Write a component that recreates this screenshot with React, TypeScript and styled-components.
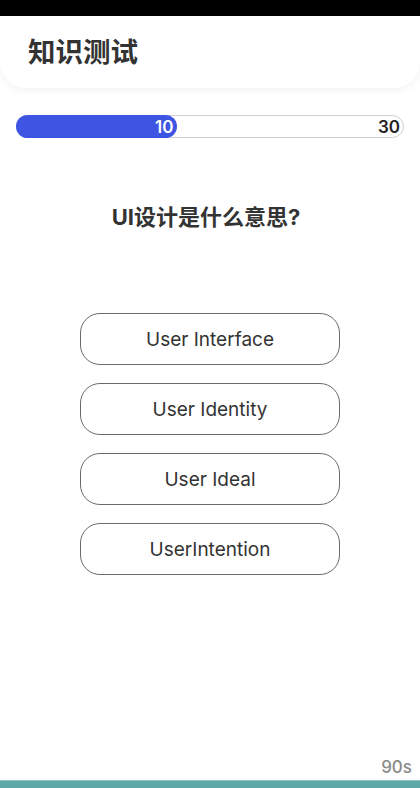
import styled, { createGlobalStyle } from 'styled-components'

const GlobalStyle = createGlobalStyle`
  html, body {
    margin: 0;
    padding: 0;
    background: #ffffff;
  }
  body {
    font-family: Inter, "Noto Sans CJK SC", "Noto Sans", sans-serif;
    color: #333333;
  }
`

const options = ['User Interface', 'User Identity', 'User Ideal', 'UserIntention']

const current = 10
const total = 30

const App = (): JSX.Element => {
  return (
    <Page>
      <GlobalStyle />
      <StatusBar />
      <Header>
        <Title>知识测试</Title>
      </Header>
      <ProgressTrack>
        <ProgressFill style={{ width: `${(current / total) * 100 + 8.5}%` }}>
          <FillLabel>{current}</FillLabel>
        </ProgressFill>
        <TotalLabel>{total}</TotalLabel>
      </ProgressTrack>
      <Question>UI设计是什么意思?</Question>
      <Options>
        {options.map((o) => (
          <OptionButton key={o}>{o}</OptionButton>
        ))}
      </Options>
      <Spacer />
      <Timer>90s</Timer>
      <BottomBar />
    </Page>
  )
}

const Page = styled.div`
  width: 420px;
  height: 788px;
  display: flex;
  flex-direction: column;
  overflow: hidden;
`
const StatusBar = styled.div`
  height: 16px;
  background: #000000;
  flex-shrink: 0;
`
const Header = styled.div`
  height: 72px;
  display: flex;
  align-items: center;
  padding: 0 28px 4px 28px;
  box-sizing: border-box;
  background: #ffffff;
  border-radius: 0 0 26px 26px;
  box-shadow: 0 2px 8px rgba(0, 0, 0, 0.06);
  flex-shrink: 0;
`
const Title = styled.h1`
  margin: 0;
  font-size: 27.5px;
  font-weight: 700;
  color: #333333;
  font-family: "Noto Sans CJK SC", sans-serif;
`
const ProgressTrack = styled.div`
  margin: 27px 16px 0 16px;
  height: 23px;
  border: 1px solid #cfcfcf;
  border-radius: 12px;
  box-sizing: border-box;
  display: flex;
  align-items: center;
  position: relative;
`
const ProgressFill = styled.div`
  position: absolute;
  left: -1px;
  top: -1px;
  height: 23px;
  background: #3d55e2;
  border-radius: 12px;
  display: flex;
  align-items: center;
  justify-content: flex-end;
  padding-right: 4px;
  box-sizing: border-box;
`
const FillLabel = styled.span`
  color: #ffffff;
  font-size: 17px;
  font-weight: 600;
`
const TotalLabel = styled.span`
  margin-left: auto;
  padding-right: 3px;
  font-size: 17px;
  font-weight: 600;
  color: #222222;
`
const Question = styled.h2`
  margin: 64px 8px 0 0;
  text-align: center;
  font-size: 22px;
  font-weight: 700;
  color: #333333;
  line-height: 30px;
`
const Options = styled.div`
  margin-top: 81px;
  display: flex;
  flex-direction: column;
  align-items: center;
  gap: 18px;
`
const OptionButton = styled.button`
  width: 260px;
  height: 52px;
  border: 1px solid #6a6a6a;
  border-radius: 20px;
  background: #ffffff;
  font-family: Inter, "Noto Sans", sans-serif;
  font-size: 19px;
  color: #333333;
  cursor: pointer;
`
const Spacer = styled.div`
  flex: 1;
`
const Timer = styled.div`
  text-align: right;
  padding-right: 8px;
  font-size: 17px;
  font-weight: 500;
  color: #8a8a8a;
  line-height: 20px;
  margin-bottom: 3px;
`
const BottomBar = styled.div`
  height: 7px;
  background: #5fa8a8;
  border-top: 1px solid #8cc4c4;
  flex-shrink: 0;
`

export default App
